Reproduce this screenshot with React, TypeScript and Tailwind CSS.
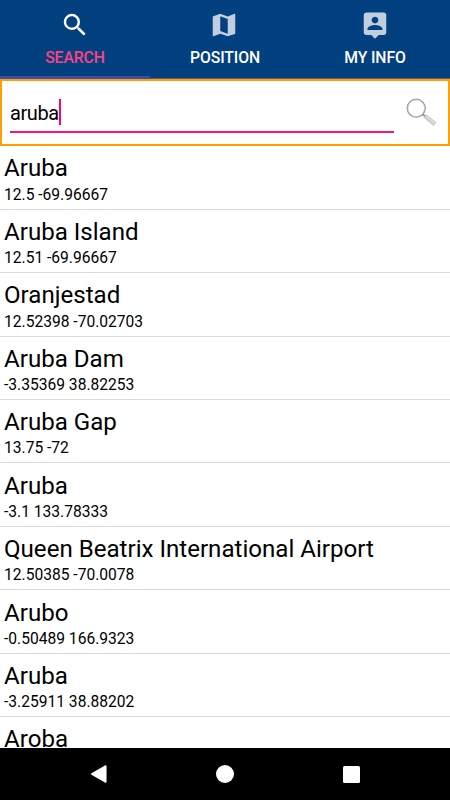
const results = [
  { name: "Aruba", coords: "12.5 -69.96667" },
  { name: "Aruba Island", coords: "12.51 -69.96667" },
  { name: "Oranjestad", coords: "12.52398 -70.02703" },
  { name: "Aruba Dam", coords: "-3.35369 38.82253" },
  { name: "Aruba Gap", coords: "13.75 -72" },
  { name: "Aruba", coords: "-3.1 133.78333" },
  { name: "Queen Beatrix International Airport", coords: "12.50385 -70.0078" },
  { name: "Arubo", coords: "-0.50489 166.9323" },
  { name: "Aruba", coords: "-3.25911 38.88202" },
  { name: "Aroba", coords: "" },
];

const tabs = [
  {
    label: "SEARCH",
    active: true,
    iconClass: "mr-[1px]",
    path: "M15.5 14h-.79l-.28-.27A6.471 6.471 0 0 0 16 9.5 6.5 6.5 0 1 0 9.5 16c1.61 0 3.09-.59 4.23-1.57l.27.28v.79l5 4.99L20.49 19l-4.99-5zm-6 0C7.01 14 5 11.99 5 9.5S7.01 5 9.5 5 14 7.01 14 9.5 11.99 14 9.5 14z",
  },
  {
    label: "POSITION",
    active: false,
    iconClass: "mr-[2px] opacity-75",
    path: "M20.5 3l-.16.03L15 5.1 9 3 3.36 4.9c-.21.07-.36.25-.36.48V20.5c0 .28.22.5.5.5l.16-.03L9 18.9l6 2.1 5.64-1.9c.21-.07.36-.25.36-.48V3.5c0-.28-.22-.5-.5-.5zM15 19l-6-2.11V5l6 2.11V19z",
  },
  {
    label: "MY INFO",
    active: false,
    iconClass: "mr-[1px] opacity-75",
    path: "M19 2H5c-1.11 0-2 .9-2 2v14c0 1.1.89 2 2 2h4l3 3 3-3h4c1.1 0 2-.9 2-2V4c0-1.1-.9-2-2-2zm-7 3.3c1.49 0 2.7 1.21 2.7 2.7 0 1.49-1.21 2.7-2.7 2.7S9.3 9.49 9.3 8c0-1.49 1.21-2.7 2.7-2.7zM18 16H6v-.9c0-2 4-3.1 6-3.1s6 1.1 6 3.1v.9z",
  },
];

function Magnifier() {
  return (
    <svg className="h-[30px] w-[34px] shrink-0" viewBox="0 0 34 30" fill="none">
      <defs>
        <linearGradient id="handle" x1="22.5" y1="25" x2="27" y2="20" gradientUnits="userSpaceOnUse">
          <stop stopColor="#a8a8a8" />
          <stop offset=".3" stopColor="#cfcfcf" />
          <stop offset=".65" stopColor="#e0e0e0" />
          <stop offset="1" stopColor="#8c8c8c" />
        </linearGradient>
      </defs>
      <path d="M17.5 17.2l3 2.4" stroke="#999" strokeWidth="2" />
      <path d="M21 17.6l10.2 8-2.6 3.2-9.6-8.4z" fill="url(#handle)" stroke="#b4b4b4" strokeWidth=".5" />
      <circle cx="11.2" cy="11.2" r="8.9" fill="#fff" stroke="#969696" strokeWidth="1.5" />
      <circle cx="11.2" cy="11.2" r="8.3" stroke="#dcdcdc" strokeWidth=".7" />
    </svg>
  );
}

export default function App() {
  return (
    <div className="flex h-[800px] w-[450px] flex-col overflow-hidden bg-white font-[Roboto,sans-serif] text-black">
      <header className="grid h-[79px] shrink-0 grid-cols-3 bg-[#034080]">
        {tabs.map((tab) => (
          <div
            key={tab.label}
            className={`flex flex-col items-center pt-[9.5px] ${
              tab.active ? "border-b-[3px] border-[#404da3] text-[#ff4081]" : "border-b border-[#66587a] text-white"
            }`}
          >
            <svg className={`size-[30px] shrink-0 fill-white ${tab.iconClass}`} viewBox="0 0 24 24">
              <path d={tab.path} />
            </svg>
            <span className="mt-[8px] text-[15.75px] leading-5 font-medium tracking-[-0.1px]">{tab.label}</span>
          </div>
        ))}
      </header>

      <div className="flex h-[67px] shrink-0 border-2 border-[#ff9f00] pl-2">
        <div className="mt-[15px] flex h-[37px] w-[384px] border-b-2 border-[#f81470]">
          <span className="mt-[5px] w-[49px] text-[20px] leading-6 tracking-[-0.4px]">aruba</span>
          <span className="mt-[3px] h-[26px] w-[2px] bg-[#ff0070]" />
        </div>
        <div className="mt-[16px] ml-[11px]">
          <Magnifier />
        </div>
      </div>

      <ul className="min-h-0 grow overflow-hidden pt-[0.3px]">
        {results.map((result, i) => (
          <li key={i} className="h-[63.45px] border-b border-[#dadada] pt-[8.2px] pl-1">
            <div className="text-[24.1px] leading-[29px] whitespace-nowrap">{result.name}</div>
            <div className="mt-[1.2px] text-[15.6px] leading-[20px]">{result.coords}</div>
          </li>
        ))}
      </ul>

      <nav className="flex h-[52px] shrink-0 items-center bg-black pl-[90px]">
        <svg className="h-[20px] w-[18px]" viewBox="0 0 18 20">
          <path d="M15.8 2v16L1.8 10z" fill="white" stroke="white" strokeWidth="1.5" strokeLinejoin="round" />
        </svg>
        <span className="ml-[108px] size-[18px] rounded-full bg-white" />
        <span className="ml-[109px] size-[17px] rounded-[1.5px] bg-white" />
      </nav>
    </div>
  );
}
